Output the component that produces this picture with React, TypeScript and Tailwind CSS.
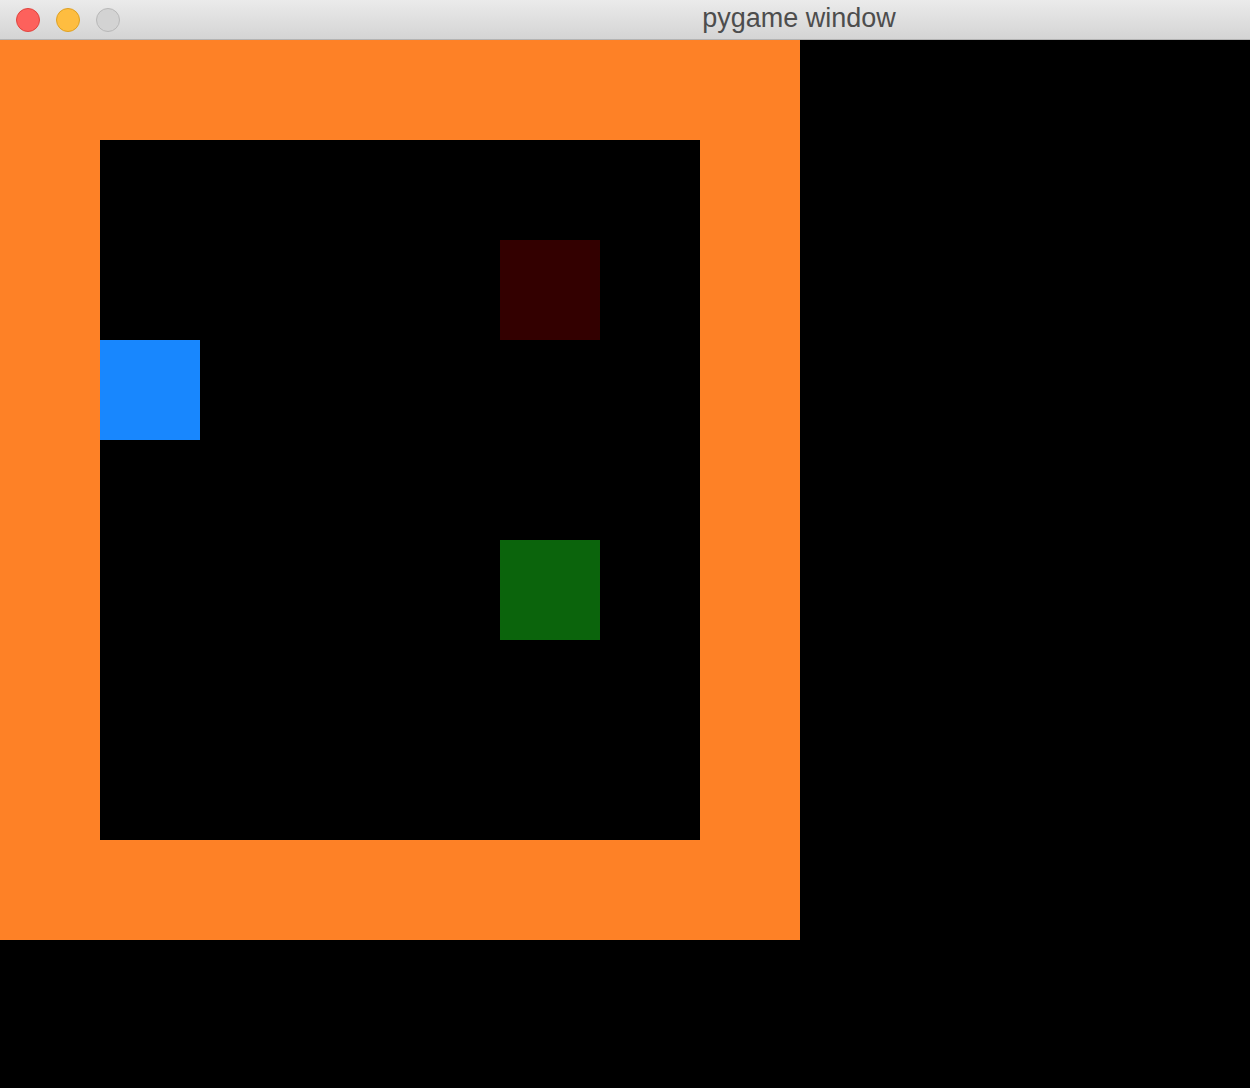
const cells = [
  { key: 'enemy', col: 'col-start-5', row: 'row-start-2', color: 'bg-[#330000]' },
  { key: 'player', col: 'col-start-1', row: 'row-start-3', color: 'bg-[#1887fe]' },
  { key: 'goal', col: 'col-start-5', row: 'row-start-5', color: 'bg-[#0b640c]' },
];

function TitleBar() {
  return (
    <div className="flex h-[40px] items-center border-b border-[#b3b3b3] bg-gradient-to-b from-[#ebebeb] to-[#d4d4d4]">
      <div className="flex items-center gap-[16px] pl-[16px]">
        <span className="h-[24px] w-[24px] rounded-full border border-[#e0443e] bg-[#fd615c]" />
        <span className="h-[24px] w-[24px] rounded-full border border-[#dea123] bg-[#febd40]" />
        <span className="h-[24px] w-[24px] rounded-full border border-[#b8b8b8] bg-[#d3d3d3]" />
      </div>
      <div className="flex flex-1 justify-center pl-[228px] pb-[2px]">
        <span className="text-[27px] text-[#4d4d4d]" style={{ fontFamily: '"Liberation Sans", Arial, sans-serif' }}>
          pygame window
        </span>
      </div>
    </div>
  );
}

export default function App() {
  return (
    <div className="h-[1088px] w-[1250px] overflow-hidden bg-black">
      <TitleBar />
      <div className="w-[800px] bg-[#fe8126] p-[100px]">
        <div className="grid grid-cols-[repeat(6,100px)] grid-rows-[repeat(7,100px)] bg-black">
          {cells.map(c => (
            <div key={c.key} className={`${c.col} ${c.row} ${c.color}`} />
          ))}
        </div>
      </div>
    </div>
  );
}
